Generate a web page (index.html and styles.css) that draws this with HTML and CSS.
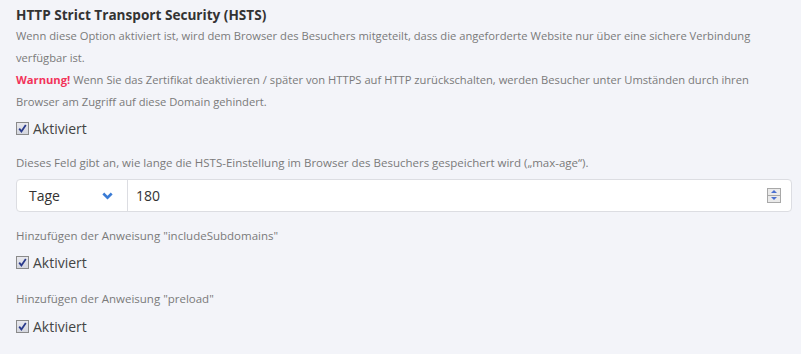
FILE: index.html
```html
<!DOCTYPE html>
<html lang="de">
<head>
<meta charset="utf-8">
<link rel="stylesheet" href="styles.css">
</head>
<body>
<div class="page">
  <h2 class="title">HTTP Strict Transport Security (HSTS)</h2>
  <p class="desc">Wenn diese Option aktiviert ist, wird dem Browser des Besuchers mitgeteilt, dass die angeforderte Website nur über eine sichere Verbindung verfügbar ist.<br><span class="warn">Warnung!</span> Wenn Sie das Zertifikat deaktivieren / später von HTTPS auf HTTP zurückschalten, werden Besucher unter Umständen durch ihren Browser am Zugriff auf diese Domain gehindert.</p>
  <label class="check first"><span class="box"><svg width="9" height="9" viewBox="0 0 9 9"><path d="M1.2 4.6 L3.4 7.4 L7.8 1" fill="none" stroke="#2a3a8c" stroke-width="1.8"/></svg></span>Aktiviert</label>

  <p class="label l1">Dieses Feld gibt an, wie lange die HSTS-Einstellung im Browser des Besuchers gespeichert wird („max-age“).</p>
  <div class="field">
    <div class="unit"><span>Tage</span><svg class="chev" width="11" height="8" viewBox="0 0 11 8"><path d="M1.3 1.5 L5.5 5.6 L9.7 1.5" fill="none" stroke="#3a7bd5" stroke-width="2.6"/></svg></div>
    <div class="num"><span>180</span>
      <div class="spin"><div class="sb up"></div><div class="sb down"></div></div>
    </div>
  </div>

  <p class="label l2">Hinzufügen der Anweisung "includeSubdomains"</p>
  <label class="check"><span class="box"><svg width="9" height="9" viewBox="0 0 9 9"><path d="M1.2 4.6 L3.4 7.4 L7.8 1" fill="none" stroke="#2a3a8c" stroke-width="1.8"/></svg></span>Aktiviert</label>

  <p class="label l3">Hinzufügen der Anweisung "preload"</p>
  <label class="check last"><span class="box"><svg width="9" height="9" viewBox="0 0 9 9"><path d="M1.2 4.6 L3.4 7.4 L7.8 1" fill="none" stroke="#2a3a8c" stroke-width="1.8"/></svg></span>Aktiviert</label>
</div>
</body>
</html>
```
FILE: styles.css
```css
html, body { margin: 0; padding: 0; }
body { background: #f3f4f9; font-family: "Open Sans", "Noto Sans", sans-serif; color: #777; }
.page { padding: 4px 9px 0 16px; }
.title { margin: 0; font-size: 13.6px; font-weight: 700; color: #333; line-height: 21px; }
.desc { margin: 0; font-size: 11.2px; line-height: 22px; color: #7a7a7a; }
.warn { color: #f2335a; font-weight: 700; }
.check { display: flex; align-items: center; font-size: 14px; color: #444; height: 22px; margin-top: 4px; }
.check.last { margin-top: 5px; }
.box { width: 11px; height: 11px; border: 1px solid #8a8a8a; background: linear-gradient(#e8e8ee, #d4d6de); margin-right: 4px; display: flex; align-items: center; justify-content: center; }
.label { margin: 12px 0 0; font-size: 11.5px; line-height: 22px; color: #7a7a7a; }
.l1 { margin-top: 13px; }
.field { display: flex; height: 31px; margin-top: 5px; background: #fff; border: 1px solid #dcdde2; border-radius: 4px; }
.unit { box-sizing: border-box; width: 111px; padding: 0 14px 0 12px; display: flex; align-items: center; justify-content: space-between; border-right: 1px solid #dcdde2; font-size: 14px; color: #333; }
.num { flex: 1; display: flex; align-items: center; justify-content: space-between; padding: 0 10px 0 8px; font-size: 14px; color: #333; }
.spin { display: flex; flex-direction: column; width: 12px; border: 1px solid #a8a8a8; }
.sb { height: 6px; position: relative; background: #eaeaea; }
.sb.up { border-bottom: 1px solid #a8a8a8; }
.sb.up::after { content: ""; position: absolute; left: 3px; top: 1px; border-left: 3px solid transparent; border-right: 3px solid transparent; border-bottom: 3px solid #4a6fd0; }
.sb.down::after { content: ""; position: absolute; left: 3px; top: 1px; border-left: 3px solid transparent; border-right: 3px solid transparent; border-top: 3px solid #4a6fd0; }
.l2 { margin-top: 13px; }
.l3 { margin-top: 15px; }
```
